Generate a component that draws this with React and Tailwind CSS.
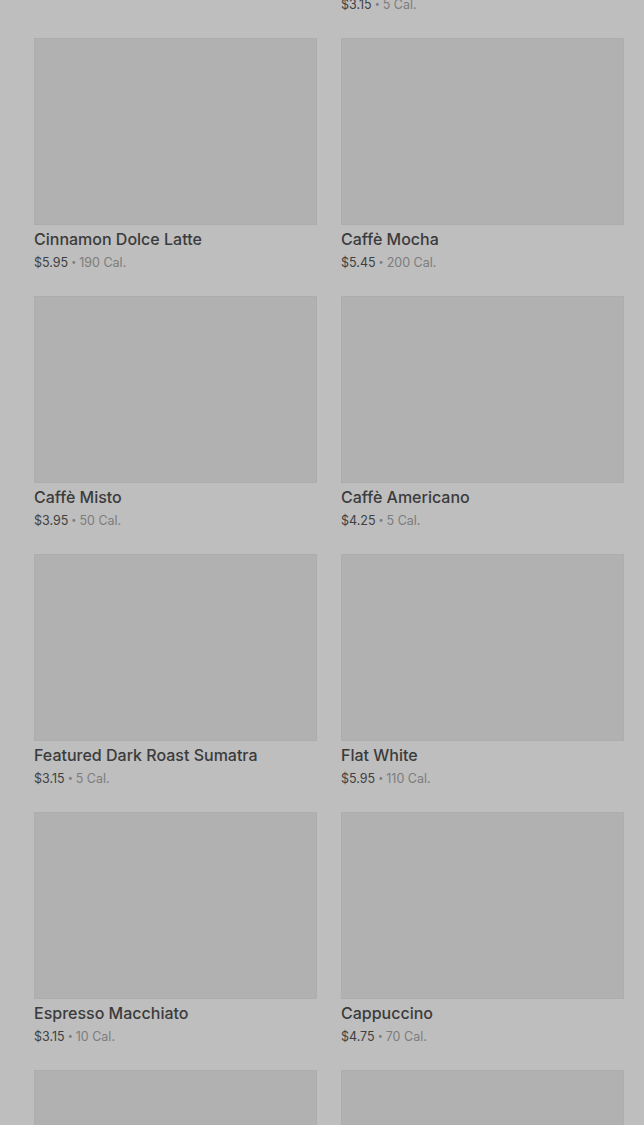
import React from "react";

const items = [
  { name: "", price: "", cal: "", hidden: true },
  { name: "Featured Blonde Roast", price: "$3.15", cal: "5 Cal." },
  { name: "Cinnamon Dolce Latte", price: "$5.95", cal: "190 Cal." },
  { name: "Caffè Mocha", price: "$5.45", cal: "200 Cal." },
  { name: "Caffè Misto", price: "$3.95", cal: "50 Cal." },
  { name: "Caffè Americano", price: "$4.25", cal: "5 Cal." },
  { name: "Featured Dark Roast Sumatra", price: "$3.15", cal: "5 Cal." },
  { name: "Flat White", price: "$5.95", cal: "110 Cal." },
  { name: "Espresso Macchiato", price: "$3.15", cal: "10 Cal." },
  { name: "Cappuccino", price: "$4.75", cal: "70 Cal." },
  { name: "Caramel Macchiato", price: "$5.45", cal: "250 Cal." },
  { name: "White Chocolate Mocha", price: "$5.75", cal: "430 Cal." },
];

function MenuCard({ item }) {
  return (
    <div className="flex flex-col">
      <div className="h-[187px] bg-[#b1b1b1] border border-[#adadad]" />
      <div className="mt-[3px] text-[16px] leading-[22px] font-medium text-[#3b3b3b]">
        {item.name}
      </div>
      <div className="mt-[3px] h-[20px] text-[12.5px] leading-[20px] text-[#7c7c7c]">
        {item.price ? (
          <>
            <span className="text-[#404040]">{item.price}</span>
            <span className="text-[9px] leading-none mx-[3px] relative -top-[2px]">•</span>
            <span>{item.cal}</span>
          </>
        ) : (
          <span>&nbsp;</span>
        )}
      </div>
    </div>
  );
}

export default function App() {
  return (
    <div
      className="w-[644px] h-[1125px] overflow-hidden bg-[#bebebe]"
      style={{ fontFamily: "Inter, 'Noto Sans', sans-serif" }}
    >
      <div className="-mt-[220px] pl-[34px] pr-[20px] grid grid-cols-2 gap-x-[24px] gap-y-[23px]">
        {items.map((it, i) => (
          <MenuCard key={i} item={it} />
        ))}
      </div>
    </div>
  );
}
